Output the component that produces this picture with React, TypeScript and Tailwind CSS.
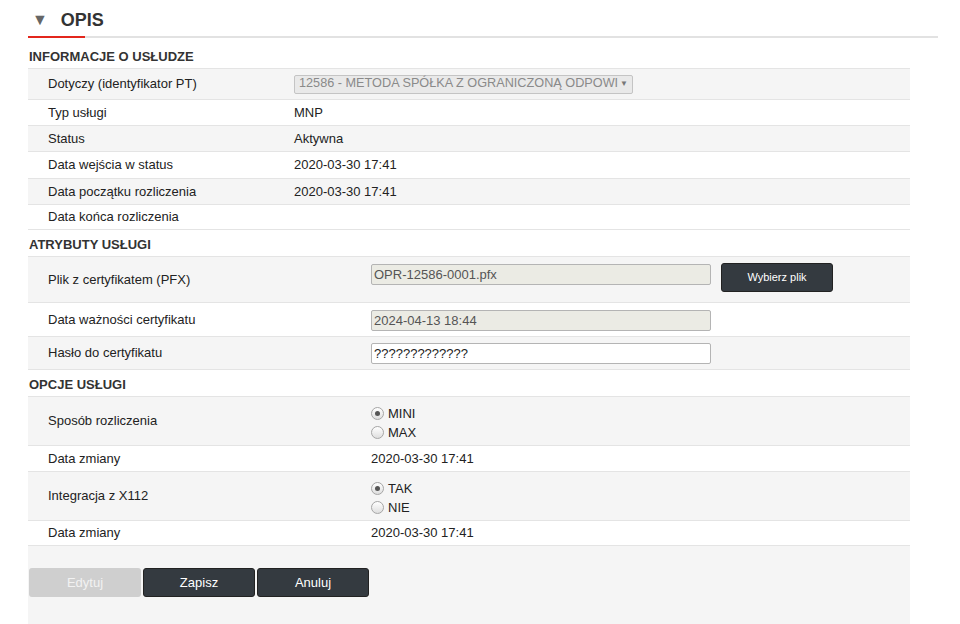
import React from "react";

type Row = { label: string; value?: React.ReactNode; h: string; gray: boolean };

function Radio({ checked, label }: { checked?: boolean; label: string }) {
  return (
    <label className="flex items-center gap-[4px] leading-[19px]">
      <span className="flex h-[13px] w-[13px] items-center justify-center rounded-full border border-[#a6a6a6] bg-[linear-gradient(#fff,#dedede)]">
        {checked && <span className="h-[5px] w-[5px] rounded-full bg-[#555]" />}
      </span>
      <span>{label}</span>
    </label>
  );
}

function Section({ title, rows, labelW }: { title: string; rows: Row[]; labelW: string }) {
  return (
    <div>
      <div className="flex h-[26px] items-center pl-px pt-[4px] font-bold text-[13px] text-[#333]">{title}</div>
      {rows.map((r, i) => (
        <div
          key={r.label + i}
          className={`flex items-center border-t border-[#e4e4e4] ${i === rows.length - 1 ? "border-b" : ""} ${r.h} ${
            r.gray ? "bg-[#f5f5f5]" : "bg-white"
          }`}
        >
          <div className={`${labelW} shrink-0 pl-5`}>{r.label}</div>
          <div className="flex-1">{r.value}</div>
        </div>
      ))}
    </div>
  );
}

const inputCls = "h-[21px] w-[340px] rounded-[2px] border border-[#b4b4b4] px-[2px] text-[13px] leading-[19px]";

export default function App() {
  const info: Row[] = [
    {
      label: "Dotyczy (identyfikator PT)",
      h: "h-[31px]",
      gray: true,
      value: (
        <div className="flex h-[19px] w-[339px] items-center justify-between rounded-[2px] border border-[#c4c4c4] bg-[#e9e9e9] pl-[4px] pr-[4px] text-[#8a8a8a]">
          <span className="whitespace-nowrap text-[12.7px]">12586 - METODA SPÓŁKA Z OGRANICZONĄ ODPOWI</span>
          <span className="text-[8px] text-[#777]">▼</span>
        </div>
      ),
    },
    { label: "Typ usługi", value: "MNP", h: "h-[26px]", gray: false },
    { label: "Status", value: "Aktywna", h: "h-[26px]", gray: true },
    { label: "Data wejścia w status", value: "2020-03-30 17:41", h: "h-[27px]", gray: false },
    { label: "Data początku rozliczenia", value: "2020-03-30 17:41", h: "h-[26px]", gray: true },
    { label: "Data końca rozliczenia", value: "", h: "h-[26px]", gray: false },
  ];

  const attrs: Row[] = [
    {
      label: "Plik z certyfikatem (PFX)",
      h: "h-[46px]",
      gray: true,
      value: (
        <div className="flex items-start gap-[10px] pb-[4px]">
          <div className={`${inputCls} mt-px bg-[#ebebe4] text-[#555]`}>OPR-12586-0001.pfx</div>
          <button className="h-[29px] w-[112px] rounded-[3px] border border-[#222] bg-[#343a40] text-[11px] text-white">
            Wybierz plik
          </button>
        </div>
      ),
    },
    {
      label: "Data ważności certyfikatu",
      h: "h-[34px]",
      gray: false,
      value: <div className={`${inputCls} mt-px bg-[#ebebe4] text-[#555]`}>2024-04-13 18:44</div>,
    },
    {
      label: "Hasło do certyfikatu",
      h: "h-[34px]",
      gray: true,
      value: <div className={`${inputCls} bg-white text-[#222]`}>?????????????</div>,
    },
  ];

  const opts: Row[] = [
    {
      label: "Sposób rozliczenia",
      h: "h-[49px]",
      gray: true,
      value: (
        <div className="pt-[4px]">
          <Radio checked label="MINI" />
          <Radio label="MAX" />
        </div>
      ),
    },
    { label: "Data zmiany", value: "2020-03-30 17:41", h: "h-[26px]", gray: false },
    {
      label: "Integracja z X112",
      h: "h-[49px]",
      gray: true,
      value: (
        <div className="pt-[4px]">
          <Radio checked label="TAK" />
          <Radio label="NIE" />
        </div>
      ),
    },
    { label: "Data zmiany", value: "2020-03-30 17:41", h: "h-[26px]", gray: false },
  ];

  return (
    <div className="h-[624px] overflow-hidden bg-white pl-[28px] pr-[22px] font-['Liberation_Sans',Arial,sans-serif] text-[13px] text-[#222]">
      <div className="relative flex h-[38px] items-center border-b-2 border-[#e2e2e2] pt-[4px]">
        <span className="ml-[4px] text-[16px] text-[#666]">▼</span>
        <span className="ml-[13px] text-[18px] font-bold text-[#333]">OPIS</span>
        <div className="absolute bottom-[-2px] left-0 h-[2px] w-[57px] bg-[#e3261c]" />
      </div>
      <div className="mr-[28px]">
        <div className="h-[4px]" />
        <Section title="INFORMACJE O USŁUDZE" rows={info} labelW="w-[266px]" />
        <Section title="ATRYBUTY USŁUGI" rows={attrs} labelW="w-[343px]" />
        <Section title="OPCJE USŁUGI" rows={opts} labelW="w-[343px]" />
        <div className="h-[80px] bg-[#f5f5f5] pt-[22px] pl-px">
          <div className="flex gap-[2px]">
            <button className="h-[29px] w-[112px] rounded-[3px] bg-[#cfcfcf] text-[#f2f2f2]">Edytuj</button>
            <button className="h-[29px] w-[112px] rounded-[3px] border border-[#222] bg-[#343a40] text-white">Zapisz</button>
            <button className="h-[29px] w-[112px] rounded-[3px] border border-[#222] bg-[#343a40] text-white">Anuluj</button>
          </div>
        </div>
      </div>
    </div>
  );
}
